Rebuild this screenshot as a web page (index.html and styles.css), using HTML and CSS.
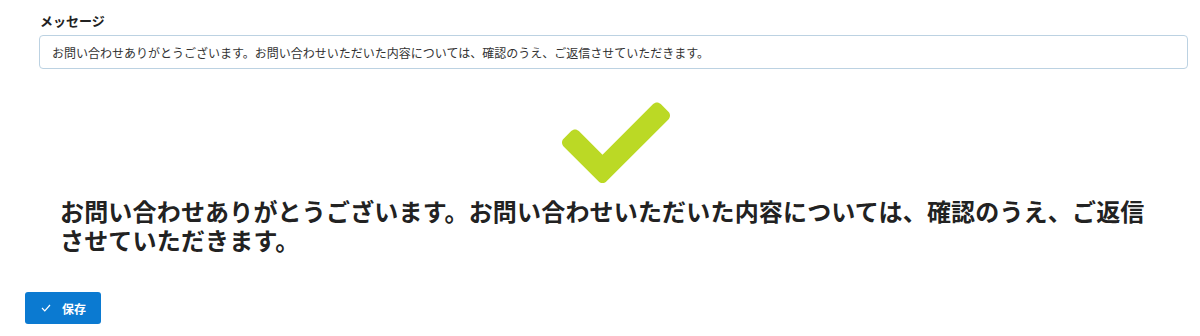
FILE: index.html
```html
<!DOCTYPE html>
<html lang="ja">
<head>
    <meta charset="UTF-8">
    <meta name="viewport" content="width=device-width, initial-scale=1.0">
    <title>お問い合わせ</title>
    <link rel="stylesheet" href="styles.css">
</head>
<body>
    <div class="field">
        <label for="message">メッセージ</label>
        <input type="text" id="message" name="message" value="お問い合わせありがとうございます。お問い合わせいただいた内容については、確認のうえ、ご返信させていただきます。">
    </div>

    <div class="result">
        <svg class="check-icon" width="108" height="82" viewBox="0 64 512 386">
            <path fill="#bbd925" d="M173.898 439.404l-166.4-166.4c-9.997-9.997-9.997-26.206 0-36.204l36.203-36.204c9.997-9.998 26.207-9.998 36.204 0L192 312.69 432.095 72.596c9.997-9.997 26.207-9.997 36.204 0l36.203 36.204c9.997 9.997 9.997 26.206 0 36.204l-294.4 294.401c-9.998 9.997-26.207 9.997-36.204-.001z"/>
        </svg>
        <h1 class="result-text">お問い合わせありがとうございます。お問い合わせいただいた内容については、確認のうえ、ご返信させていただきます。</h1>
    </div>

    <div class="actions">
        <button type="button" class="save-btn">
            <svg class="btn-icon" width="10" height="8" viewBox="0 0 10 8">
                <polyline points="1,4 3.8,6.8 9,1" fill="none" stroke="white" stroke-width="1.2"/>
            </svg>
            保存
        </button>
    </div>
</body>
</html>
```

FILE: styles.css
```css
* {
    margin: 0;
    padding: 0;
    box-sizing: border-box;
}
body {
    font-family: "Noto Sans CJK JP", "Noto Sans", sans-serif;
    background-color: white;
    color: #222;
    width: 1200px;
}
.field {
    padding: 12px 12px 0 39px;
}
.field label {
    display: block;
    font-size: 13px;
    font-weight: bold;
    line-height: 18px;
    margin-bottom: 5px;
    padding-left: 1px;
}
.field input {
    display: block;
    width: 100%;
    height: 34px;
    padding: 0 12px;
    border: 1px solid #bcd2e2;
    border-radius: 4px;
    font-family: inherit;
    font-size: 12px;
    color: #333;
    background-color: white;
}
.result {
    margin-top: 33px;
    padding: 0 28px 0 60px;
}
.check-icon {
    display: block;
    margin: 0 auto;
}
.result-text {
    max-width: 1100px;
    margin-top: 12px;
    font-size: 24px;
    font-weight: bold;
    line-height: 29px;
    letter-spacing: 0.18px;
    color: #222;
}
.actions {
    margin-top: 38px;
    padding-left: 25px;
}
.save-btn {
    display: flex;
    align-items: center;
    gap: 11px;
    height: 32px;
    padding: 0 15px 0 16px;
    background-color: #0b7ad1;
    color: white;
    border: none;
    border-radius: 3px;
    font-family: inherit;
    font-size: 12px;
    font-weight: bold;
    cursor: pointer;
}
.save-btn:hover {
    background-color: #0866b0;
}
```
